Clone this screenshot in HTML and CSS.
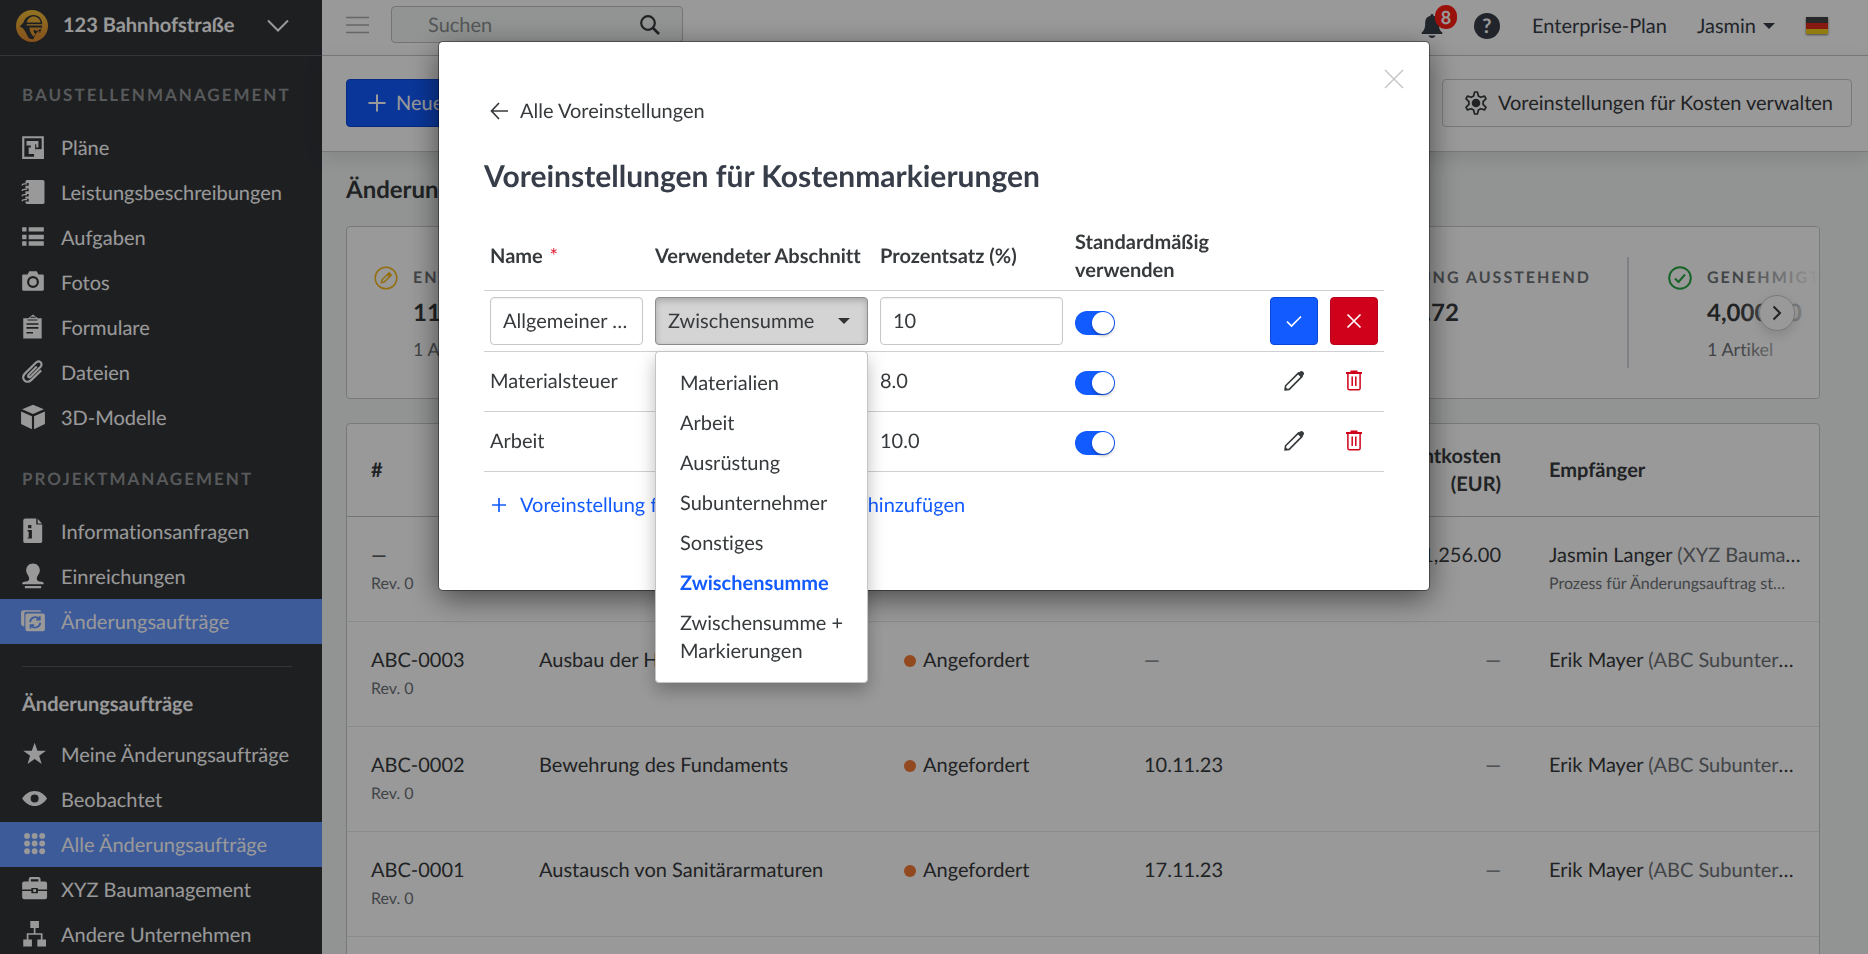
FILE: index.html
```html
<!DOCTYPE html>
<html lang="de">
<head>
<meta charset="utf-8">
<title>Änderungsaufträge – 123 Bahnhofstraße</title>
<meta name="viewport" content="width=device-width, initial-scale=1">
<link rel="stylesheet" href="styles.css">
</head>
<body>
<svg class="sprite" aria-hidden="true">
  <symbol id="i-pencil" viewBox="0 0 22 22"><path d="M2 20l.6-4.2L15.600 2.900l3.500 3.500L6.200 19.400z" fill="none" stroke="currentColor" stroke-width="1.600" stroke-linejoin="round"/><path d="M14.600 3.900L17 1.500c.9-.8 2-.8 2.800 0l.7.7c.8.8.8 1.900 0 2.800L18.100 7.400z" fill="currentColor"/><path d="M2 20l.4-3 2.600 2.600z" fill="currentColor"/></symbol>
  <symbol id="i-trash" viewBox="0 0 18 22"><path d="M1 3h16M5.500 1.500h7" stroke="currentColor" stroke-width="1.800" fill="none"/><path d="M2.900 3.500v14.700c0 1 .6 1.600 1.600 1.600h9c1 0 1.600-.6 1.600-1.600V3.500M7.200 6.500V16M10.800 6.500V16" stroke="currentColor" stroke-width="1.500" fill="none"/></symbol>
</svg>

<div class="app">
  <aside class="sidebar">
    <button class="project" type="button">
      <svg class="project-logo" viewBox="0 0 30 30" aria-hidden="true">
        <defs><linearGradient id="gold" x1="0" y1="0" x2="0" y2="1"><stop offset="0" stop-color="#f3c03a"/><stop offset="1" stop-color="#e0882f"/></linearGradient></defs>
        <circle cx="15" cy="15" r="15" fill="url(#gold)"/>
        <path d="M3.500 15.500L7 11.800C8.500 7.500 12 4.800 16.300 4.800c4.400 0 7.500 2.700 8.200 7.200v3.500l-1 2.500-1.500 6-1.500-3.500-2.500 3-1 4.500-5-1.500-3.500-6.500L6.500 17z" fill="#32343a"/>
        <path d="M10 11.800C10.800 8.400 13 6.200 16.500 6.200s5.900 2.200 6.600 5.600z" fill="#eeb237"/>
        <path d="M12.500 16.500h11v1.200c-2 0-2.500 1.800-4 1.800s-1.800-1-2.500-1c-1 0-.5 3.500 1.200 3.500L16.500 25c-2.200-2-3.700-5-4-8.500z" fill="#e59b33"/>
        <path d="M21.500 19l1.500 5-4.500 5-2.500-1 2-4.500z" fill="#e0902f"/>
        <path d="M10 13.900h15" stroke="#eeb237" stroke-width="1.200"/>
      </svg>
      <span class="project-name">123 Bahnhofstraße</span>
      <svg class="project-caret" viewBox="0 0 24 14" aria-hidden="true"><path d="M2 1.500l10 10 10-10" fill="none" stroke="currentColor" stroke-width="2"/></svg>
    </button>

    <h2 class="nav-heading">Baustellenmanagement</h2>
    <nav class="nav">
      <a class="nav-item" href="#plaene"><svg viewBox="0 0 24 24"><path fill-rule="evenodd" d="M2 2h20v21H2zM4 4v17h9v-4h7V4z"/><path d="M6 6.500h11v6h-2v-3h-1v9H8v-6h2v-2H6z"/><path d="M14 14h8v9h-8z"/></svg>Pläne</a>
      <a class="nav-item" href="#leistung"><svg viewBox="0 0 24 24"><path d="M6.500 1H21q1.600 0 1.600 1.600v19Q22.600 23 21 23H6.500Q5 23 5 21.500v-19Q5 1 6.500 1z"/><path d="M8 5H4.500Q2.500 5 2.500 6.500M8 10H4.500Q2.500 10 2.500 11.500M8 15H4.500Q2.500 15 2.500 16.500M8 19.500H4.500Q2.500 19.500 2.500 21" fill="none" stroke="#323438" stroke-width="2.400"/><path d="M6.500 4.500H4Q2 4.500 2 6M6.500 9.500H4Q2 9.500 2 11M6.500 14.500H4Q2 14.500 2 16M6.500 19H4Q2 19 2 20.500" fill="none" stroke="#fff" stroke-width="1.200"/></svg>Leistungsbeschreibungen</a>
      <a class="nav-item" href="#aufgaben"><svg viewBox="0 0 24 24"><path d="M2 3h4v4H2zM8 3h14v4H8zM2 10h4v4H2zM8 10h14v4H8zM2 16h4v4H2zM8 16h14v4H8z"/></svg>Aufgaben</a>
      <a class="nav-item" href="#fotos"><svg viewBox="0 0 24 24"><path fill-rule="evenodd" d="M3 5h4l1.500-3h7L17 5h4q1 0 1 1v13q0 1-1 1H3q-1 0-1-1V6q0-1 1-1zM12 6.500a5.500 5.500 0 100 11 5.500 5.500 0 000-11zm0 2a3.500 3.500 0 110 7 3.500 3.500 0 010-7z"/></svg>Fotos</a>
      <a class="nav-item" href="#formulare"><svg viewBox="0 0 24 24"><path fill-rule="evenodd" d="M3 4h4.500L12 .5 16.500 4H20v18.500H3zM6 8.500V10h11V8.500zM6 12v1.500h11V12zM6 16.500V18h6v-1.500z"/><path d="M7 5.500h9M9.500 3h5" stroke="#323438" stroke-width="1"/></svg>Formulare</a>
      <a class="nav-item" href="#dateien"><svg viewBox="0 0 24 24"><path d="M15.500 7L8 14.500c-1.500 1.500.3 3.200 1.800 1.800l9-9c3-3-1-7-4.200-3.900L4.500 13.500c-4.500 4.500 1.500 10.300 5.800 6L19.500 10.500" fill="none" stroke="#fff" stroke-width="2"/></svg>Dateien</a>
      <a class="nav-item" href="#modelle"><svg viewBox="0 0 24 24"><path d="M12 .8l10 4-10 4.500-10-4.500zM1 7l10 4.400v12L1 18.500zM23 7l-10 4.400v12l10-4.900z"/></svg>3D-Modelle</a>
    </nav>

    <h2 class="nav-heading">Projektmanagement</h2>
    <nav class="nav">
      <a class="nav-item" href="#info"><svg viewBox="0 0 24 24"><path fill-rule="evenodd" d="M5 .5h10V6h5.500v15.500q0 1.500-1.500 1.500H4.500Q3 23 3 21.500v-19Q3 .5 5 .5zM7.500 6.500v3h3v-3zM7 11v1.500h1v5.500H7v1h4v-8z"/><path d="M16.300.8l4 4.200h-4z"/></svg>Informationsanfragen</a>
      <a class="nav-item" href="#einreichungen"><svg viewBox="0 0 24 24"><path d="M12 .5c4 0 6.300 3 6.300 6.500 0 3-2.800 5-2.800 7.500 0 1.800 1.500 2.800 4.500 2.800 1.500 0 2 .8 2 2.400H2c0-1.600.5-2.400 2-2.400 3 0 4.500-1 4.500-2.800C8.500 12 5.700 10 5.700 7 5.700 3.500 8 .5 12 .5zM4.500 21.300h15v2h-15z"/></svg>Einreichungen</a>
      <a class="nav-item active" href="#auftraege"><svg viewBox="0 0 24 24"><path d="M3.500 2H18q1.500 0 1.500 1.500H5.500Q4 3.500 4 5v12q-3-.3-3-2.500v-10Q1 2 3.500 2z"/><path fill-rule="evenodd" d="M7 5h14q2 0 2 2v12.500q0 2-2 2H7q-2 0-2-2V7q0-2 2-2z"/><path d="M9.300 13a4.800 4.800 0 018.600-2.600M18.700 13.500a4.800 4.800 0 01-8.600 2.600M18.300 7.500v3.300H15M9.700 19v-3.300H13" fill="none" stroke="#6696ff" stroke-width="1.600"/></svg>Änderungsaufträge</a>
    </nav>

    <hr class="nav-rule">
    <h3 class="nav-title">Änderungsaufträge</h3>
    <nav class="nav">
      <a class="nav-item" href="#meine"><svg viewBox="0 0 24 24"><path d="M13.500 1.500l2.600 7.500H24l-6.300 4.700 2.300 7.500-6.500-4.500L7 21.200l2.300-7.500L3 9h7.900z"/></svg>Meine Änderungsaufträge</a>
      <a class="nav-item" href="#beobachtet"><svg viewBox="0 0 24 24"><path fill-rule="evenodd" d="M2 11.500C5 7 9 4.500 13.500 4.500S22 7 25 11.500c-3 4.500-7 7-11.500 7S5 16 2 11.500zm11.500-3.700a3.700 3.700 0 100 7.400 3.700 3.700 0 000-7.400z"/></svg>Beobachtet</a>
      <a class="nav-item active" href="#alle"><svg viewBox="0 0 24 24"><g><circle cx="6.500" cy="4.500" r="2.700"/><circle cx="13.500" cy="4.500" r="2.700"/><circle cx="20.500" cy="4.500" r="2.700"/><circle cx="6.500" cy="11.500" r="2.700"/><circle cx="13.500" cy="11.500" r="2.700"/><circle cx="20.500" cy="11.500" r="2.700"/><circle cx="6.500" cy="18.700" r="2.700"/><circle cx="13.500" cy="18.700" r="2.700"/><circle cx="20.500" cy="18.700" r="2.700"/></g></svg>Alle Änderungsaufträge</a>
      <a class="nav-item" href="#xyz"><svg viewBox="0 0 24 24"><path fill-rule="evenodd" d="M8 5V3q0-2 2-2h7q2 0 2 2v2h4q2 0 2 2v5.500h-8.500V11h-6v1.500H2V7q0-2 2-2zm2 0h7V3h-7z"/><path fill-rule="evenodd" d="M2 13.800h8.500V16h6v-2.200H25v5.700q0 2-2 2H4q-2 0-2-2z"/><path d="M12.200 12.200h2.600v2.500h-2.600z"/></svg>XYZ Baumanagement</a>
      <a class="nav-item" href="#andere"><svg viewBox="0 0 24 24"><path d="M9.500 0h8v6.500h-8zM3 17h8v6.500H3zM16 17h8v6.500h-8z"/><path d="M13.500 6v6M7 17.500V12h13v5.500" fill="none" stroke="#fff" stroke-width="1.600"/></svg>Andere Unternehmen</a>
    </nav>
  </aside>

  <div class="page">
    <header class="topbar">
      <button class="menu-toggle" type="button" aria-label="Menü"><svg viewBox="0 0 24 18"><path d="M0 1.500h23M0 9h23M0 16.500h23" stroke="currentColor" stroke-width="1.600"/></svg></button>
      <label class="search">
        <input class="search-input" type="search" placeholder="Suchen" aria-label="Suchen">
        <svg viewBox="0 0 20 20" aria-hidden="true"><circle cx="8" cy="8" r="6.800" fill="none" stroke="currentColor" stroke-width="2.200"/><path d="M13 13l6 6" stroke="currentColor" stroke-width="2.600"/></svg>
      </label>
      <div class="topbar-right">
        <button class="bell" type="button" aria-label="Benachrichtigungen">
          <svg viewBox="0 0 22 26"><path d="M11 1c1 0 1.500.7 1.500 1.700 3.800.8 5.300 3.600 5.300 7.300 0 5 1 7.500 3.500 9.500V21H.7v-1.500C3.200 17.500 4.200 15 4.200 10c0-3.700 1.500-6.500 5.300-7.300C9.500 1.700 10 1 11 1zM7.500 22.500h7c-.5 1.600-1.700 2.500-3.500 2.500s-3-.9-3.500-2.500z" fill="currentColor"/></svg>
          <span class="badge">8</span>
        </button>
        <button class="help" type="button" aria-label="Hilfe">?</button>
        <a class="plan" href="#plan">Enterprise-Plan</a>
        <button class="user" type="button">Jasmin <span class="caret"></span></button>
        <button class="flag" type="button" aria-label="Sprache: Deutsch"><span class="flag-art"></span></button>
      </div>
    </header>

    <div class="toolbar">
      <button class="btn btn-primary" type="button"><svg viewBox="0 0 18 18"><path d="M9 0.500v17M.5 9h17" stroke="currentColor" stroke-width="2"/></svg>Neuer Auftrag</button>
      <div class="toolbar-right">
        <button class="btn" type="button">Exportieren</button>
        <button class="btn" type="button"><svg class="gear" viewBox="0 0 24 24"><path d="M10.600 1h2.800l1 4 2.300 1.300 3.900-1.200 1.400 2.500L19.100 10.600v2.800L22 16.400l-1.400 2.500-3.900-1.200-2.300 1.300-1 4h-2.800l-1-4-2.300-1.300-3.900 1.200L2 16.400l2.900-3v-2.800L2 7.600l1.400-2.500 3.900 1.200L9.600 5z" fill="none" stroke="currentColor" stroke-width="1.700" stroke-linejoin="round"/><circle cx="12" cy="12" r="4.300" fill="currentColor"/></svg>Voreinstellungen für Kosten verwalten</button>
      </div>
    </div>

    <main class="content">
      <h1 class="page-title">Änderungsaufträge</h1>
      <section class="summary" aria-label="Übersicht">
        <div class="stats">
          <div class="stat">
            <svg class="stat-icon draft" viewBox="0 0 24 24"><circle cx="12" cy="12" r="10.800"/><path d="M7.500 16.500l.5-2.700 5.600-5.600 2.200 2.200-5.600 5.600z"/><path d="M13.600 8.200l1.500-1.500 2.200 2.200-1.500 1.500z" fill="currentColor"/></svg>
            <div><h2 class="stat-label">Entwurf</h2><p class="stat-value">11,256.00</p><p class="stat-note">1 Artikel</p></div>
          </div>
          <div class="stat"></div>
          <div class="stat">
            <span class="stat-icon"></span>
            <div><h2 class="stat-label">Genehmigung ausstehend</h2><p class="stat-value">1,025,130.72</p></div>
          </div>
          <div class="stat">
            <svg class="stat-icon approved" viewBox="0 0 24 24"><circle cx="12" cy="12" r="10.800"/><path d="M7 12.500l3.500 3.500L17 8.500"/></svg>
            <div><h2 class="stat-label">Genehmigt</h2><p class="stat-value">4,000.00</p><p class="stat-note">1 Artikel</p></div>
          </div>
        </div>
        <button class="next" type="button" aria-label="Weiter"><svg viewBox="0 0 10 16"><path d="M1.500 1.500L8 8l-6.500 6.500" fill="none" stroke="currentColor" stroke-width="2"/></svg></button>
      </section>

      <div class="orders-card">
        <table class="orders">
          <colgroup><col class="c-num"><col><col class="c-status"><col class="c-date"><col class="c-cost"><col class="c-to"></colgroup>
          <thead><tr><th>#</th><th></th><th></th><th></th><th class="num">Gesamtkosten (EUR)</th><th>Empfänger</th></tr></thead>
          <tbody>
            <tr><td>—<small>Rev. 0</small></td><td></td><td></td><td></td><td class="num">11,256.00</td><td class="to"><div class="clip">Jasmin Langer <span class="muted">(XYZ Baumanagement)</span></div><small class="clip">Prozess für Änderungsauftrag starten</small></td></tr>
            <tr><td>ABC-0003<small>Rev. 0</small></td><td>Ausbau der Haustechnik</td><td><span class="dot"></span>Angefordert</td><td class="muted">—</td><td class="num muted">—</td><td class="to"><div class="clip">Erik Mayer <span class="muted">(ABC Subunternehmer)</span></div></td></tr>
            <tr><td>ABC-0002<small>Rev. 0</small></td><td>Bewehrung des Fundaments</td><td><span class="dot"></span>Angefordert</td><td>10.11.23</td><td class="num muted">—</td><td class="to"><div class="clip">Erik Mayer <span class="muted">(ABC Subunternehmer)</span></div></td></tr>
            <tr><td>ABC-0001<small>Rev. 0</small></td><td>Austausch von Sanitärarmaturen</td><td><span class="dot"></span>Angefordert</td><td>17.11.23</td><td class="num muted">—</td><td class="to"><div class="clip">Erik Mayer <span class="muted">(ABC Subunternehmer)</span></div></td></tr>
          </tbody>
        </table>
      </div>
    </main>
  </div>
</div>

<div class="overlay">
  <div class="modal" role="dialog" aria-modal="true" aria-labelledby="dlg-title">
    <button class="close" type="button" aria-label="Schließen"><svg viewBox="0 0 20 20"><path d="M1 1l18 18M19 1L1 19" stroke="currentColor" stroke-width="1.500"/></svg></button>
    <a class="back" href="#voreinstellungen"><svg viewBox="0 0 18 18"><path d="M9 1L1.500 9 9 17M1.500 9H18" fill="none" stroke="currentColor" stroke-width="1.700"/></svg>Alle Voreinstellungen</a>
    <h2 class="dlg-title" id="dlg-title">Voreinstellungen für Kostenmarkierungen</h2>
    <table class="presets">
      <colgroup><col class="p-name"><col class="p-sec"><col class="p-pct"><col><col class="p-act"><col class="p-act"></colgroup>
      <thead><tr><th id="h-name">Name <span class="req">*</span></th><th id="h-sec">Verwendeter Abschnitt</th><th id="h-pct">Prozentsatz (%)</th><th id="h-def" class="wrap">Standardmäßig verwenden</th><th></th><th></th></tr></thead>
      <tbody>
        <tr class="editing">
          <td><input class="field" type="text" aria-labelledby="h-name" value="Allgemeiner Unternehmer"></td>
          <td>
            <div class="dropdown">
              <select class="field select" aria-labelledby="h-sec"><option>Materialien</option><option>Arbeit</option><option>Ausrüstung</option><option>Subunternehmer</option><option>Sonstiges</option><option selected>Zwischensumme</option><option>Zwischensumme + Markierungen</option></select>
              <ul class="menu">
                <li><button type="button">Materialien</button></li>
                <li><button type="button">Arbeit</button></li>
                <li><button type="button">Ausrüstung</button></li>
                <li><button type="button">Subunternehmer</button></li>
                <li><button type="button">Sonstiges</button></li>
                <li><button class="selected" type="button">Zwischensumme</button></li>
                <li><button type="button">Zwischensumme + Markierungen</button></li>
              </ul>
            </div>
          </td>
          <td><input class="field" type="text" aria-labelledby="h-pct" value="10"></td>
          <td><input class="switch" type="checkbox" role="switch" aria-labelledby="h-def" checked></td>
          <td><button class="square confirm" type="button" aria-label="Speichern"><svg viewBox="0 0 16 16"><path d="M1 8.500l4.500 4.500L15 3.500" fill="none" stroke="currentColor" stroke-width="1.700"/></svg></button></td>
          <td><button class="square cancel" type="button" aria-label="Abbrechen"><svg viewBox="0 0 16 16"><path d="M1.500 1.500l13 13M14.500 1.500l-13 13" stroke="currentColor" stroke-width="1.700"/></svg></button></td>
        </tr>
        <tr>
          <td>Materialsteuer</td><td></td><td>8.0</td>
          <td><input class="switch" type="checkbox" role="switch" aria-labelledby="h-def" checked></td>
          <td><button class="square" type="button" aria-label="Bearbeiten"><svg class="pencil"><use href="#i-pencil"/></svg></button></td>
          <td><button class="square remove" type="button" aria-label="Löschen"><svg class="trash"><use href="#i-trash"/></svg></button></td>
        </tr>
        <tr>
          <td>Arbeit</td><td>Arbeit</td><td>10.0</td>
          <td><input class="switch" type="checkbox" role="switch" aria-labelledby="h-def" checked></td>
          <td><button class="square" type="button" aria-label="Bearbeiten"><svg class="pencil"><use href="#i-pencil"/></svg></button></td>
          <td><button class="square remove" type="button" aria-label="Löschen"><svg class="trash"><use href="#i-trash"/></svg></button></td>
        </tr>
      </tbody>
    </table>
    <button class="add" type="button"><svg viewBox="0 0 18 18"><path d="M9 2v14M2 9h14" stroke="currentColor" stroke-width="1.700"/></svg>Voreinstellung für Kostenmarkierungen hinzufügen</button>
  </div>
</div>
</body>
</html>
```
FILE: styles.css
```css
*, *::before, *::after { box-sizing: border-box; }

body {
  margin: 0;
  font: 20px/28px Lato, "Open Sans", sans-serif;
  font-variant-ligatures: no-common-ligatures;
  text-rendering: geometricPrecision;
  color: #373a3c;
  background: #f2f7f5;
}

button, input, select {
  font: inherit;
  font-variant-ligatures: inherit;
  text-rendering: inherit;
  color: inherit;
}
button { border: 0; padding: 0; background: none; cursor: pointer; }
a { color: inherit; text-decoration: none; }
h1, h2, h3, p, ul { margin: 0; padding: 0; }
ul { list-style: none; }
svg { display: block; flex: none; }
.sprite { position: absolute; width: 0; height: 0; }

.app {
  display: grid;
  grid-template-columns: 322px minmax(0, 1fr);
  height: 100vh;
  overflow: hidden;
}

/* Sidebar */
.sidebar { background: #323438; color: #fff; overflow: hidden; }
.project {
  display: flex;
  align-items: center;
  width: 100%;
  height: 56px;
  padding: 0 32px 4px 16px;
  border-bottom: 1px solid #56595e;
}
.project-logo { width: 32px; height: 32px; }
.project-name { margin-left: 15px; padding-bottom: 2px; font-weight: 700; }
.project-caret { width: 24px; height: 14px; margin-left: auto; }
.nav-heading {
  height: 69px;
  padding: 25px 22px 0;
  color: #929497;
  font-size: 17px;
  font-weight: 700;
  letter-spacing: 2px;
  text-transform: uppercase;
}
.nav-item {
  display: flex;
  align-items: center;
  gap: 15px;
  height: 45px;
  padding: 0 20px;
  white-space: nowrap;
}
.nav-item svg { width: 26px; height: 26px; margin-bottom: 2px; fill: #fff; overflow: visible; }
.nav-item.active { background: #6696ff; }
.nav-rule { margin: 22px 30px 0 22px; border: 0; border-top: 1px solid #56595e; }
.nav-title { padding: 23px 22px 14px; font-size: 20px; font-weight: 700; }

/* Top bar */
.page { display: flex; flex-direction: column; min-width: 0; }
.topbar {
  display: flex;
  align-items: center;
  flex: none;
  height: 56px;
  padding: 0 40px 6px 24px;
  border-bottom: 1px solid #c8cacc;
  background: #fff;
}
.menu-toggle { color: #aaa; }
.menu-toggle svg { width: 24px; height: 18px; }
.search {
  display: flex;
  align-items: center;
  width: 292px;
  height: 37px;
  margin-left: 21px;
  padding: 0 22px 0 36px;
  border: 1px solid #c0c4c3;
  border-radius: 4px;
  background: #f2f7f5;
}
.search-input { flex: 1; min-width: 0; padding: 0; border: 0; background: none; outline: 0; }
.search-input::placeholder { color: #8d9192; opacity: 1; }
.search svg { width: 20px; height: 20px; }
.topbar-right { display: flex; align-items: center; margin-left: auto; padding-top: 2px; color: #373d49; }
.bell { position: relative; }
.bell svg { width: 22px; height: 26px; }
.badge {
  position: absolute;
  top: -8px;
  left: 14px;
  width: 22px;
  height: 24px;
  border-radius: 12px;
  background: #ff1d12;
  color: #fff;
  font-size: 18px;
  font-weight: 700;
  line-height: 24px;
}
.help {
  width: 26px;
  height: 26px;
  margin-left: 31px;
  border-radius: 50%;
  background: #373d49;
  color: #fff;
  font-weight: 700;
  line-height: 26px;
}
.plan { margin-left: 32px; }
.user { display: flex; align-items: center; gap: 7px; margin-left: 30px; }
.caret { border: 6px solid transparent; border-top-color: currentColor; border-bottom: 0; }
.flag { margin-left: 31px; }
.flag-art {
  display: block;
  width: 22px;
  height: 17px;
  background: linear-gradient(#444 0 6px, #e02a1c 6px 12px, #f4cf1c 12px);
  box-shadow: 0 1px 2px #0008;
}

/* Toolbar */
.toolbar {
  display: flex;
  align-items: center;
  justify-content: space-between;
  flex: none;
  height: 96px;
  padding: 0 16px 2px 24px;
  border-bottom: 1px solid #c8cacc;
  background: #fff;
  box-shadow: 0 6px 18px #0000001a;
}
.toolbar-right { display: flex; gap: 15px; }
.btn {
  display: flex;
  align-items: center;
  gap: 10px;
  height: 48px;
  padding: 0 18px 0 21px;
  border: 1px solid #c8cacc;
  border-radius: 4px;
  background: #fff;
  white-space: nowrap;
}
.btn svg { width: 18px; height: 18px; }
.btn .gear { width: 24px; height: 24px; }
.btn-primary { border-color: #0a46d8; background: #125bff; color: #fff; }

/* Page content */
.content { flex: 1; min-height: 0; padding: 22px 48px 0 24px; overflow: hidden; }
.page-title { font-size: 24px; line-height: 32px; }
.summary {
  position: relative;
  margin-top: 20px;
  border: 1px solid #c8cacc;
  border-radius: 4px;
  background: #fff;
  overflow: hidden;
}
.stats { display: grid; grid-template-columns: 1fr 1fr auto 190px; padding: 30px 0; }
.stat { display: flex; gap: 15px; height: 111px; padding: 9px 36px 0 27px; border-right: 2px solid #d4d4dc; white-space: nowrap; }
.stat:last-child { padding: 9px 0 0 39px; border: 0; }
.stat-icon { width: 24px; height: 24px; fill: none; stroke: currentColor; stroke-width: 1.500; }
.draft { color: #f5b91c; }
.approved { color: #28a745; stroke-width: 2; }
.stat-label {
  margin-bottom: 6px;
  color: #6f7378;
  font-size: 16px;
  line-height: 24px;
  letter-spacing: 2px;
  text-transform: uppercase;
}
.stat-value { margin-bottom: 5px; font-size: 24px; font-weight: 700; line-height: 34px; }
.stat-note { color: #6f7378; font-size: 18px; }
.summary::after {
  content: "";
  position: absolute;
  inset: 0 0 0 auto;
  width: 80px;
  background: linear-gradient(90deg, #fff0, #fff);
}
.next {
  position: absolute;
  z-index: 1;
  top: 68px;
  right: 24px;
  display: grid;
  place-items: center;
  width: 36px;
  height: 36px;
  border: 1px solid #c8cacc;
  border-radius: 50%;
  background: #fff;
  box-shadow: 0 4px 12px #0002;
}
.next svg { width: 10px; height: 16px; }

.orders-card { margin-top: 24px; padding-bottom: 60px; border: 1px solid #c8cacc; border-radius: 4px; background: #fff; }
.orders { width: 100%; border-collapse: collapse; table-layout: fixed; }
.orders tr { height: 105px; border-bottom: 1px solid #e6e8e8; }
.orders thead tr { height: 92px; border-bottom: 1px solid #c0c3c8; }
.orders th, .orders td { padding: 0 24px; text-align: left; vertical-align: middle; }
.orders td { padding-top: 24px; vertical-align: top; }
.orders .num { text-align: right; }
.orders .to { padding-right: 18px; }
.orders small { display: block; margin-top: 1px; color: #6f7378; font-size: 16px; }
.muted { color: #6f7378; }
.clip { overflow: hidden; text-overflow: ellipsis; white-space: nowrap; }
small.clip { padding-right: 12px; }
.c-num { width: 168px; }
.c-status { width: 240px; }
.c-date { width: 227px; }
.c-cost { width: 178px; }
.c-to { width: 294px; }
.dot { display: inline-block; width: 12px; height: 12px; margin-right: 7px; border-radius: 50%; background: #f57a35; }

/* Dialog */
.overlay {
  position: fixed;
  z-index: 10;
  inset: 0;
  padding-top: 42px;
  background: #0006;
}
.modal {
  position: relative;
  width: 990px;
  max-width: 100%;
  margin: 0 auto;
  padding: 55px 45px 71px;
  border-radius: 4px;
  background: #fff;
  box-shadow: 0 0 0 1px #0006, 0 8px 30px #0008;
}
.close { position: absolute; top: 27px; right: 25px; color: #c4c6c8; }
.close svg { width: 20px; height: 20px; }
.back, .add { display: flex; width: max-content; align-items: center; gap: 12px; padding: 0 6px; }
.back svg, .add svg { width: 18px; height: 18px; }
.dlg-title { margin-top: 30px; color: #373d49; font-size: 30px; line-height: 42px; }
.presets { width: 100%; margin-top: 31px; border-collapse: collapse; table-layout: fixed; }
.presets th { height: 62px; padding: 0 6px 6px; text-align: left; white-space: nowrap; }
.presets .wrap { white-space: normal; }
.presets td { height: 60px; padding: 0 6px 2px; }
.presets .editing td { height: 61px; padding-bottom: 0; }
.presets tr { border-bottom: 1px solid #d0d0d4; }
.p-name { width: 165px; }
.p-sec { width: 225px; }
.p-pct { width: 195px; }
.p-act { width: 60px; }
.presets col:nth-child(4) { width: 195px; }
.req { margin-left: 2px; color: #e0182d; font-weight: 400; }
.field {
  display: block;
  width: 100%;
  height: 48px;
  padding: 0 12px;
  border: 1px solid #c8c8c8;
  border-radius: 4px;
  background: #fff;
  box-shadow: inset 0 1px 2px #0001;
  text-overflow: ellipsis;
}
.dropdown { position: relative; }
.select {
  appearance: none;
  border-color: #8c8c8c;
  background: #d4d4d4;
  box-shadow: inset 0 3px 6px #0003;
}
.dropdown::after {
  content: "";
  position: absolute;
  top: 21px;
  right: 18px;
  border: 6px solid transparent;
  border-top-color: #333;
  border-bottom: 0;
  pointer-events: none;
}
.menu {
  position: absolute;
  z-index: 2;
  top: 54px;
  left: 0;
  right: 0;
  padding: 11px 0;
  border: 1px solid #c4c4c4;
  border-radius: 4px;
  background: #fff;
  box-shadow: 0 8px 18px #0004;
}
.menu button { width: 100%; padding: 6px 16px 6px 24px; text-align: left; }
.menu .selected { color: #125bff; font-weight: 700; }
.switch {
  display: block;
  appearance: none;
  width: 40px;
  height: 24px;
  margin: 4px 0 0;
  border-radius: 12px;
  background: #125bff;
}
.switch::before {
  content: "";
  display: block;
  width: 22px;
  height: 22px;
  margin: 1px 1px 1px 17px;
  border-radius: 50%;
  background: #fff;
  box-shadow: 0 2px 3px #0004;
}
.square { display: grid; place-items: center; width: 48px; height: 48px; border-radius: 4px; color: #373a3c; }
.square svg { width: 16px; height: 16px; }
.square .pencil { width: 22px; height: 22px; }
.square .trash { width: 18px; height: 22px; }
.confirm { border: 1px solid #0a46d8; background: #125bff; color: #fff; }
.cancel { border: 1px solid #b8001c; background: #d0021b; color: #fff; }
.remove { color: #d0021b; }
.add { margin-top: 19px; color: #125bff; }
```
